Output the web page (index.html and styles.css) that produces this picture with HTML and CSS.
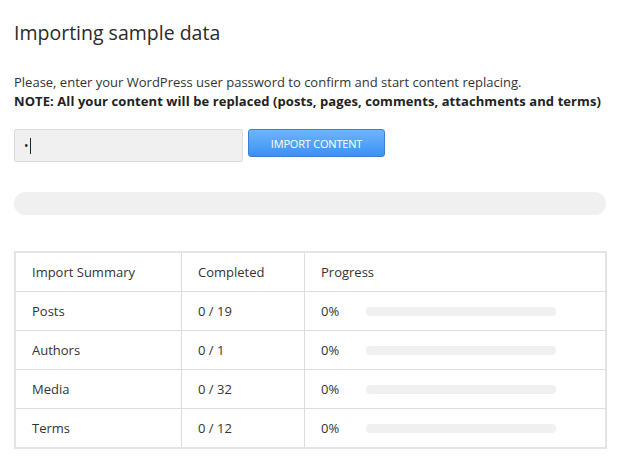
FILE: index.html
```html
<!DOCTYPE html>
<html>
<head>
<meta charset="utf-8">
<link rel="stylesheet" href="styles.css">
</head>
<body>
<div class="page">
  <h1 class="title">Importing sample data</h1>
  <p class="intro">Please, enter your WordPress user password to confirm and start content replacing.<br><strong>NOTE: All your content will be replaced (posts, pages, comments, attachments and terms)</strong></p>
  <div class="form-row">
    <div class="pw-input"><span class="dot">•</span><span class="caret"></span></div>
    <button class="btn">IMPORT CONTENT</button>
  </div>
  <div class="main-progress"></div>
  <table class="summary">
    <tr><td class="c1">Import Summary</td><td class="c2">Completed</td><td class="c3">Progress</td></tr>
    <tr><td class="c1">Posts</td><td class="c2">0 / 19</td><td class="c3"><div class="prog"><span class="pct">0%</span><span class="bar"></span></div></td></tr>
    <tr><td class="c1">Authors</td><td class="c2">0 / 1</td><td class="c3"><div class="prog"><span class="pct">0%</span><span class="bar"></span></div></td></tr>
    <tr><td class="c1">Media</td><td class="c2">0 / 32</td><td class="c3"><div class="prog"><span class="pct">0%</span><span class="bar"></span></div></td></tr>
    <tr><td class="c1">Terms</td><td class="c2">0 / 12</td><td class="c3"><div class="prog"><span class="pct">0%</span><span class="bar"></span></div></td></tr>
  </table>
</div>
</body>
</html>
```

FILE: styles.css
```css
html, body { margin: 0; padding: 0; background: #fff; }
body {
  font-family: "Open Sans", "Noto Sans", sans-serif;
  color: #333;
  font-size: 13px;
}
.page { padding: 0 22px 0 14px; }
.title {
  margin: 0;
  padding-top: 20px;
  font-size: 19.5px;
  font-weight: 400;
  line-height: 26px;
  color: #2b2b2b;
}
.intro {
  margin: 27px 0 0;
  line-height: 19px;
  color: #333;
}
.intro strong { color: #222; font-weight: 700; letter-spacing: 0.08px; }
.form-row {
  display: flex;
  align-items: flex-start;
  gap: 5px;
  margin-top: 18px;
}
.pw-input {
  box-sizing: border-box;
  width: 229px;
  height: 33px;
  background: #f0f0f0;
  border: 1px solid #dcdcdc;
  border-radius: 2px;
  display: flex;
  align-items: center;
  padding-left: 9px;
}
.dot { font-size: 12px; color: #222; line-height: 1; }
.caret { display: inline-block; width: 1px; height: 16px; background: #222; margin-left: 1px; }
.btn {
  box-sizing: border-box;
  width: 137px;
  height: 28px;
  border: 1px solid #3a7fd0;
  border-radius: 3px;
  background: linear-gradient(#6fb5fb, #3a92f4);
  color: #fff;
  font-family: "Open Sans", "Noto Sans", sans-serif;
  font-size: 11px;
  padding: 0;
  letter-spacing: -0.2px;
}
.main-progress {
  margin-top: 30px;
  height: 23px;
  border-radius: 12px;
  background: #f0f0f0;
}
.summary {
  margin-top: 36px;
  width: 593px;
  border-collapse: collapse;
  border: 2px solid #e4e4e4;
}
.summary td {
  border: 1px solid #dedede;
  height: 38px;
  padding: 0 0 0 16px;
  vertical-align: middle;
  font-size: 13px;
  color: #333;
}
.summary .c1 { width: 149px; }
.summary .c2 { width: 106px; }
.prog { display: flex; align-items: center; }
.pct { width: 45px; }
.bar {
  width: 190px;
  height: 9px;
  border-radius: 4px;
  background: #f0f0f0;
}
```
